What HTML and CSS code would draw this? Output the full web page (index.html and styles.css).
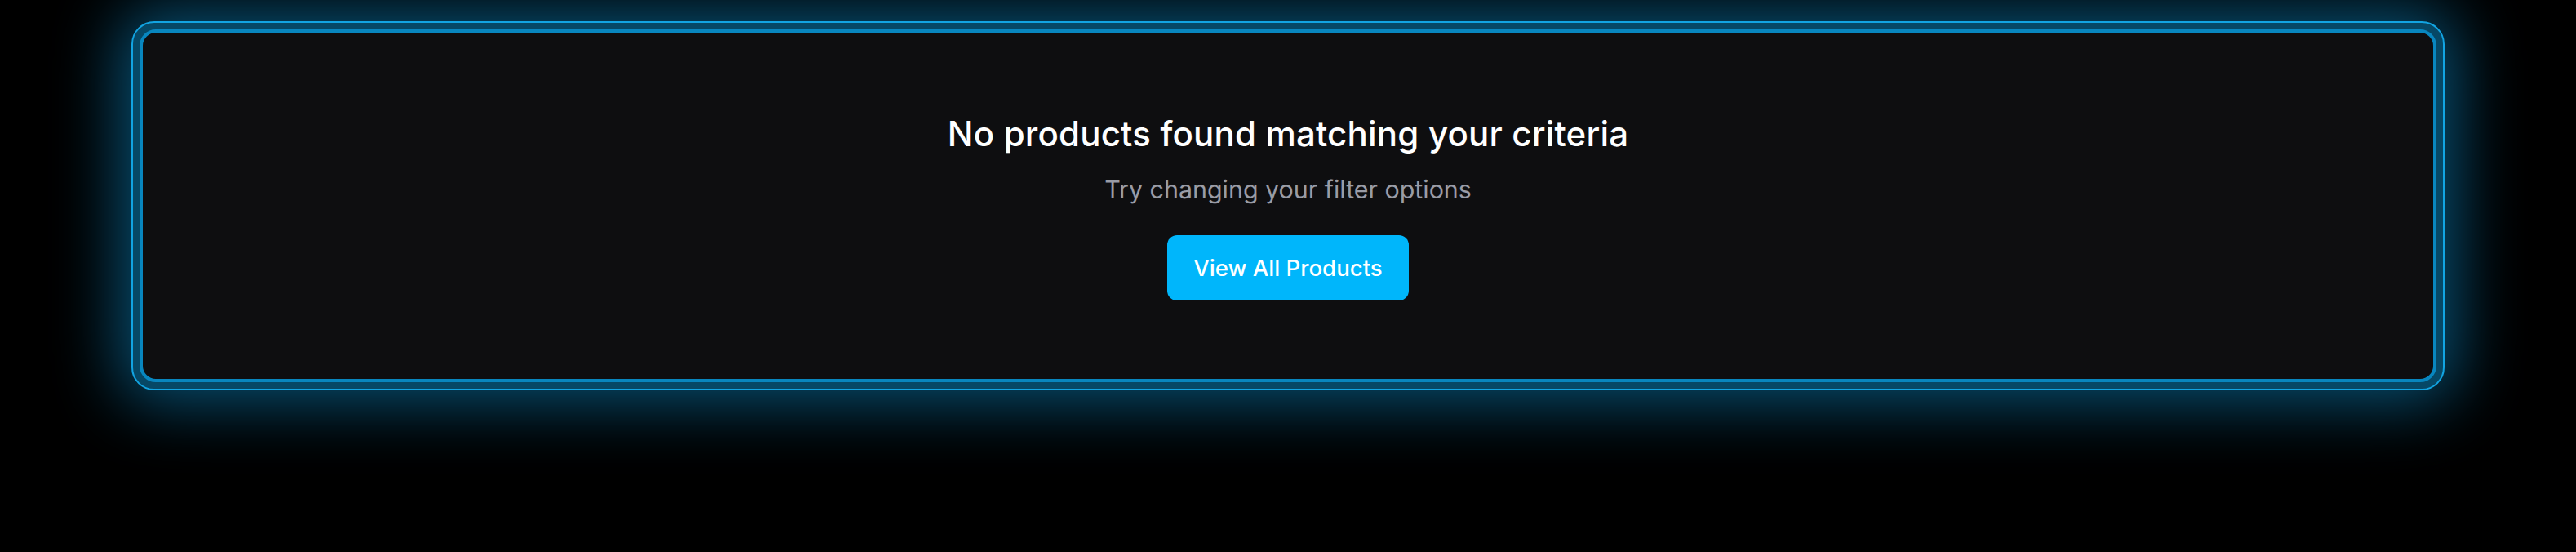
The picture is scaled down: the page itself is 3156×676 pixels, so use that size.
FILE: index.html
```html
<!DOCTYPE html>
<html lang="en">
<head>
<meta charset="utf-8">
<title>No products</title>
<link rel="stylesheet" href="styles.css">
</head>
<body>
<main class="page">
  <section class="glow-frame">
    <div class="empty-card">
      <h2 class="empty-title">No products found matching your criteria</h2>
      <p class="empty-sub">Try changing your filter options</p>
      <button class="view-all" type="button">View All Products</button>
    </div>
  </section>
</main>
</body>
</html>
```
FILE: styles.css
```css
html, body {
  margin: 0;
  padding: 0;
  background: #000;
}

body {
  width: 3156px;
  height: 676px;
  overflow: hidden;
  font-family: Inter, "Liberation Sans", sans-serif;
}

.page {
  padding-top: 26px;
}

.glow-frame {
  width: 2834px;
  margin: 0 auto;
  box-sizing: border-box;
  border: 2px solid #12a4e2;
  border-radius: 28px;
  padding: 8px;
  background: #064866;
  box-shadow: 0 0 80px 14px rgba(14, 150, 215, 0.55);
}

.empty-card {
  box-sizing: border-box;
  border: 4px solid #0886bf;
  border-radius: 20px;
  background: #0e0e10;
  padding: 96px 32px;
  display: flex;
  flex-direction: column;
  align-items: center;
}

.empty-title {
  margin: 0;
  font-size: 42px;
  line-height: 56px;
  font-weight: 500;
  color: #ffffff;
  letter-spacing: 0.2px;
}

.empty-sub {
  margin: 16px 0 0;
  font-size: 30.4px;
  line-height: 48px;
  color: #9a9ca6;
}

.view-all {
  margin-top: 32px;
  height: 80px;
  padding: 0 32px;
  border: none;
  border-radius: 12px;
  background: #00b6fb;
  color: #fff;
  font-family: Inter, "Liberation Sans", sans-serif;
  font-size: 27.6px;
  font-weight: 500;
  line-height: 40px;
}
```
